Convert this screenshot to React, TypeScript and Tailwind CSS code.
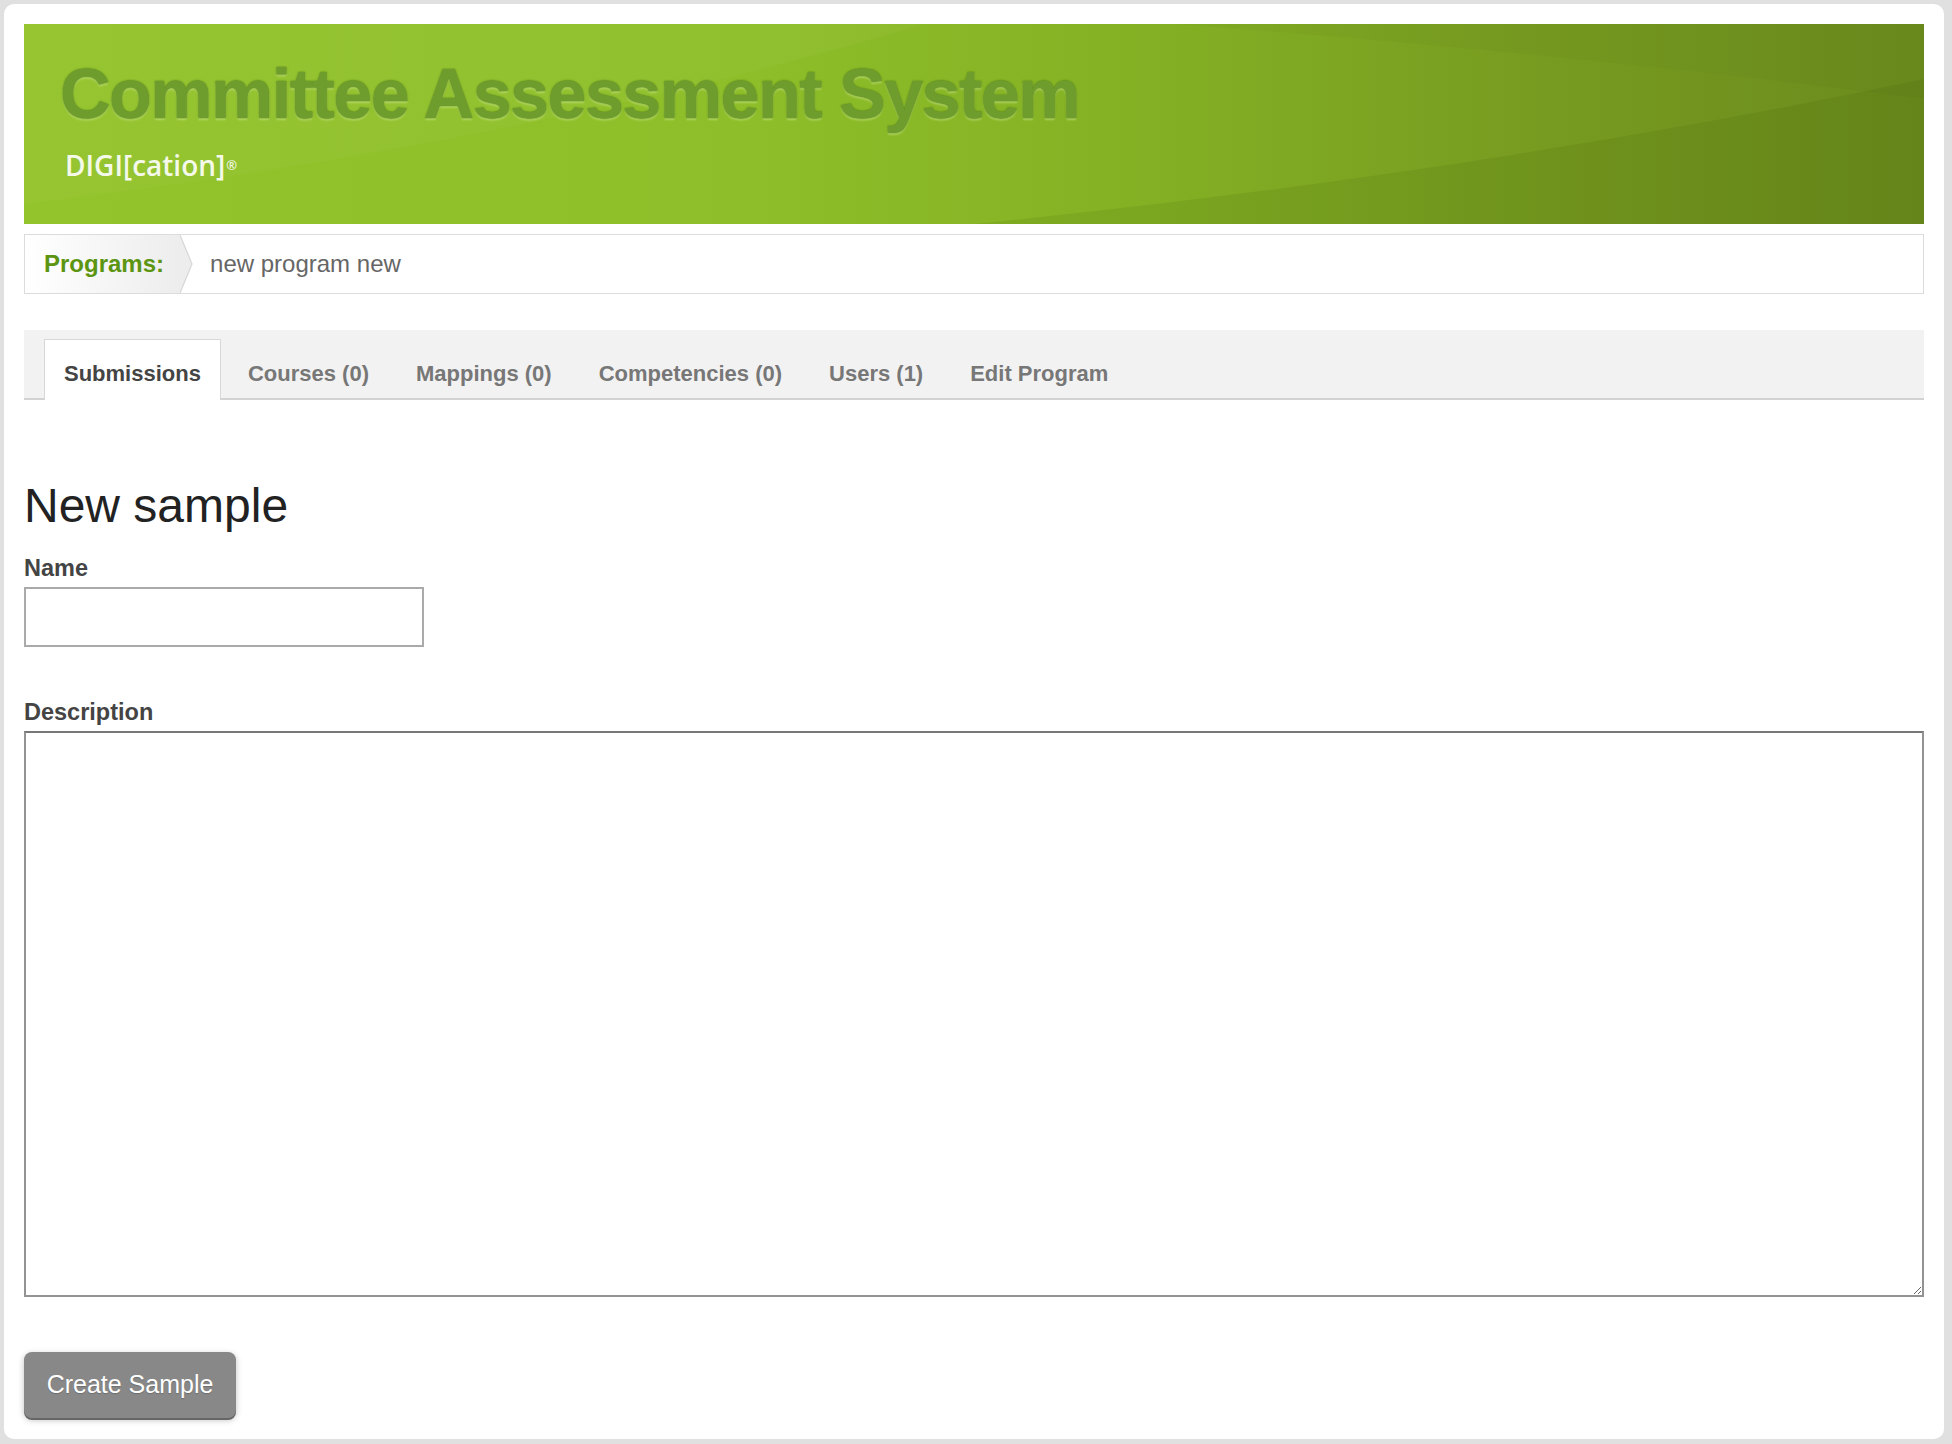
import React from 'react'

const tabs = [
  { label: 'Submissions', active: true },
  { label: 'Courses (0)' },
  { label: 'Mappings (0)' },
  { label: 'Competencies (0)' },
  { label: 'Users (1)' },
  { label: 'Edit Program' },
]

function Banner() {
  return (
    <div className="relative h-[200px] overflow-hidden bg-[linear-gradient(90deg,#93c42b_0%,#8ebe29_38%,#84b124_58%,#779b20_80%,#6b8b1d_100%)]">
      <svg
        className="absolute inset-0 h-full w-full"
        viewBox="0 0 1900 200"
        preserveAspectRatio="none"
      >
        <path d="M1150 0 Q1550 30 1900 75 L1900 0 Z" fill="#000" opacity="0.02" />
        <path d="M950 200 Q1450 150 1900 55 L1900 200 Z" fill="#2f4a00" opacity="0.1" />
        <path d="M0 0 L900 0 Q500 120 0 180 Z" fill="#fff" opacity="0.03" />
      </svg>
      <div className="relative flex flex-col pl-[36px] pt-[35px]">
        <div className="font-['Liberation_Sans',Arial,sans-serif] text-[70px] font-bold leading-[70px] tracking-[-1.5px] text-[#6e9d2e] [text-shadow:0_0_2px_#4a7514,0_2px_2px_rgba(214,242,150,0.55)]">
          Committee Assessment System
        </div>
        <div className="ml-[5px] mt-[22px] font-['Open_Sans',sans-serif] text-[28px] font-semibold leading-[28px] text-[#f4f9ea]">
          DIGI[cation]<sup className="ml-[1px] text-[13px] leading-none">®</sup>
        </div>
      </div>
    </div>
  )
}

function Breadcrumb() {
  return (
    <div className="mt-[10px] flex h-[60px] items-stretch border border-[#dcdcdc] font-['Liberation_Sans',Arial,sans-serif] text-[24px]">
      <div className="flex items-center bg-gradient-to-r from-white to-[#ededed] pl-[19px] pr-[16px] font-bold text-[#5b9511]">
        Programs:
      </div>
      <svg width="13" height="58" viewBox="0 0 13 58" className="shrink-0">
        <path d="M0 0 L12 29 L0 58 Z" fill="#ededed" />
        <path d="M0 0 L12 29 L0 58" fill="none" stroke="#d6d6d6" strokeWidth="1.2" />
      </svg>
      <div className="ml-[17px] flex items-center text-[#666]">new program new</div>
    </div>
  )
}

function Tabs() {
  return (
    <div className="mt-[36px] flex h-[70px] items-end gap-[7px] border-b-2 border-[#d2d2d2] bg-[#f2f2f2] pl-[20px]">
      {tabs.map((tab) => (
        <div
          key={tab.label}
          className={
            tab.active
              ? 'mb-[-2px] flex h-[61px] items-center border border-b-0 border-[#d8d8d8] bg-white px-[19px] pt-[7px] text-[22px] font-bold text-[#444]'
              : 'mb-[-2px] flex h-[61px] items-center border border-b-0 border-transparent px-[19px] pt-[7px] text-[22px] font-bold text-[#777]'
          }
        >
          {tab.label}
        </div>
      ))}
    </div>
  )
}

export default function App() {
  return (
    <div className="min-h-screen bg-[#e0e0e0] pb-[5px] pl-1 pr-2 pt-1 font-['Liberation_Sans',Arial,sans-serif]">
      <div className="w-[1940px] rounded-[10px] bg-white px-5 pb-[21px] pt-5">
        <Banner />
        <Breadcrumb />
        <Tabs />

        <h1 className="mt-[82px] text-[48px] font-normal leading-[48px] text-[#222]">New sample</h1>

        <label className="mt-[26px] block text-[23.5px] font-bold leading-[24px] text-[#444]">Name</label>
        <input
          type="text"
          className="mt-[7px] block h-[60px] w-[400px] border-2 border-[#aaa] px-2 text-[21px] outline-none"
        />

        <label className="mt-[53px] block text-[23.5px] font-bold leading-[24px] text-[#444]">
          Description
        </label>
        <textarea className="mt-[7px] block h-[566px] w-full border-2 border-[#939393] border-t-[#777] p-2 text-[21px] outline-none" />

        <button className="mt-[55px] flex h-[66px] w-[212px] items-center justify-center rounded-[8px] bg-[#888] text-[25px] text-white shadow-[0_2px_0_#666,0_2px_6px_rgba(0,0,0,0.25)] [text-shadow:0_1px_1px_rgba(0,0,0,0.2)]">
          Create Sample
        </button>
      </div>
    </div>
  )
}
